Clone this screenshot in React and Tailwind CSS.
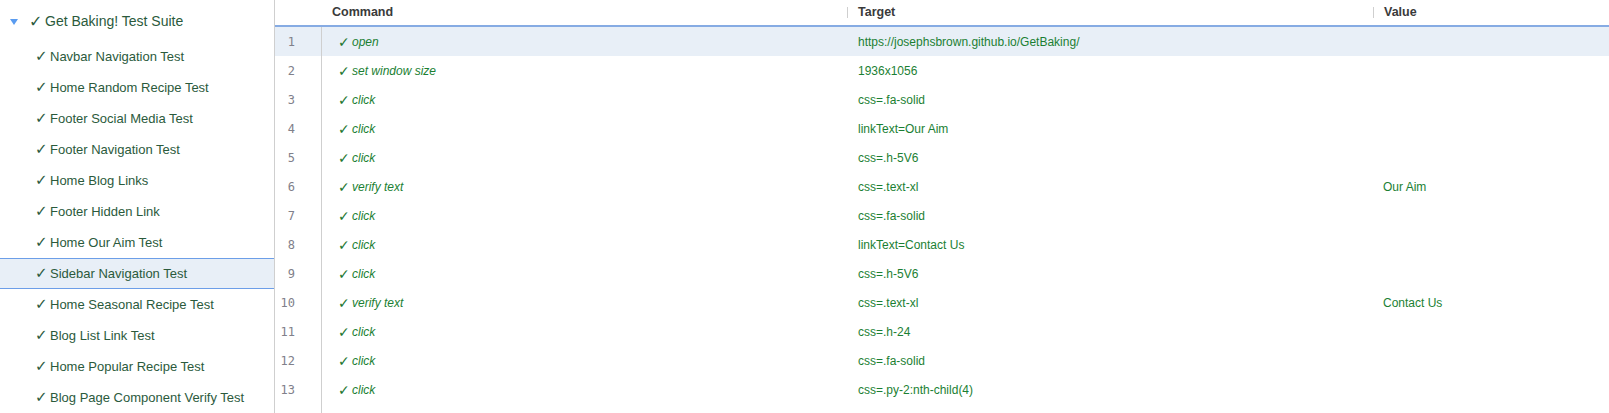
import React from "react";

const tests = [
  "Navbar Navigation Test",
  "Home Random Recipe Test",
  "Footer Social Media Test",
  "Footer Navigation Test",
  "Home Blog Links",
  "Footer Hidden Link",
  "Home Our Aim Test",
  "Sidebar Navigation Test",
  "Home Seasonal Recipe Test",
  "Blog List Link Test",
  "Home Popular Recipe Test",
  "Blog Page Component Verify Test",
];

const rows = [
  ["open", "https://josephsbrown.github.io/GetBaking/", ""],
  ["set window size", "1936x1056", ""],
  ["click", "css=.fa-solid", ""],
  ["click", "linkText=Our Aim", ""],
  ["click", "css=.h-5V6", ""],
  ["verify text", "css=.text-xl", "Our Aim"],
  ["click", "css=.fa-solid", ""],
  ["click", "linkText=Contact Us", ""],
  ["click", "css=.h-5V6", ""],
  ["verify text", "css=.text-xl", "Contact Us"],
  ["click", "css=.h-24", ""],
  ["click", "css=.fa-solid", ""],
  ["click", "css=.py-2:nth-child(4)", ""],
];

function Check({ className }) {
  return (
    <span className={"inline-block font-['DejaVu_Sans',sans-serif] leading-none " + className}>✓</span>
  );
}

export default function App() {
  return (
    <div className="flex h-[413px] w-[1609px] overflow-hidden bg-white font-['Liberation_Sans',Arial,sans-serif]">
      {/* Sidebar */}
      <div className="w-[275px] shrink-0 border-r border-[#cfcfcf] pt-[4px] text-[#2b5a3c]">
        <div className="flex h-[35px] items-center">
          <svg width="8" height="6" viewBox="0 0 8 6" className="ml-[10px] mr-[11px]">
            <path d="M0 0 L8 0 L4 6 Z" fill="#5a9cf0" />
          </svg>
          <Check className="w-[16px] text-[16px]" />
          <span className="text-[14px]">Get Baking! Test Suite</span>
        </div>
        <div className="mt-[2px] flex flex-col">
          {tests.map((t, i) => (
            <div
              key={t}
              className={
                i === 7
                  ? "flex h-[31px] items-center border-y border-[#6c9ee8] bg-[#e8eff7] pl-[35px] text-[13px]"
                  : "flex h-[31px] items-center border-y border-transparent pl-[35px] text-[13px]"
              }
            >
              <Check className="w-[15px] text-[15px]" />
              <span>{t}</span>
            </div>
          ))}
        </div>
      </div>

      {/* Main table */}
      <div className="flex min-w-0 flex-1 flex-col">
        <div className="grid h-[27px] shrink-0 grid-cols-[47px_525px_526px_1fr] items-center border-b-2 border-[#86abe3] text-[12.5px] font-bold text-[#3a3a3a]">
          <div />
          <div className="pl-[10px]">Command</div>
          <div className="flex items-center">
            <span className="mr-[10px] h-[11px] w-px bg-[#cfcfcf]" />
            Target
          </div>
          <div className="flex items-center">
            <span className="mr-[10px] h-[11px] w-px bg-[#cfcfcf]" />
            Value
          </div>
        </div>
        <div className="flex flex-1 flex-col">
          {rows.map(([cmd, target, value], i) => (
            <div
              key={i}
              className={
                i === 0
                  ? "grid h-[29px] shrink-0 grid-cols-[47px_525px_526px_1fr] items-center bg-[#e8eff7] text-[12px] text-[#1b7f33]"
                  : "grid h-[29px] shrink-0 grid-cols-[47px_525px_526px_1fr] items-center text-[12px] text-[#1b7f33]"
              }
            >
              <div className="flex h-full items-center justify-end border-r border-[#cfcfcf] pr-[26px] font-['DejaVu_Sans_Mono',monospace] text-[12px] text-[#80808a]">
                {i + 1}
              </div>
              <div className="flex items-center pl-[16px] italic">
                <Check className="w-[14px] text-[14px] text-[#23762f]" />
                <span>{cmd}</span>
              </div>
              <div className="pl-[11px]">{target}</div>
              <div className="pl-[10px]">{value}</div>
            </div>
          ))}
          <div className="grid flex-1 grid-cols-[47px_1fr]">
            <div className="border-r border-[#cfcfcf]" />
            <div />
          </div>
        </div>
      </div>
    </div>
  );
}
